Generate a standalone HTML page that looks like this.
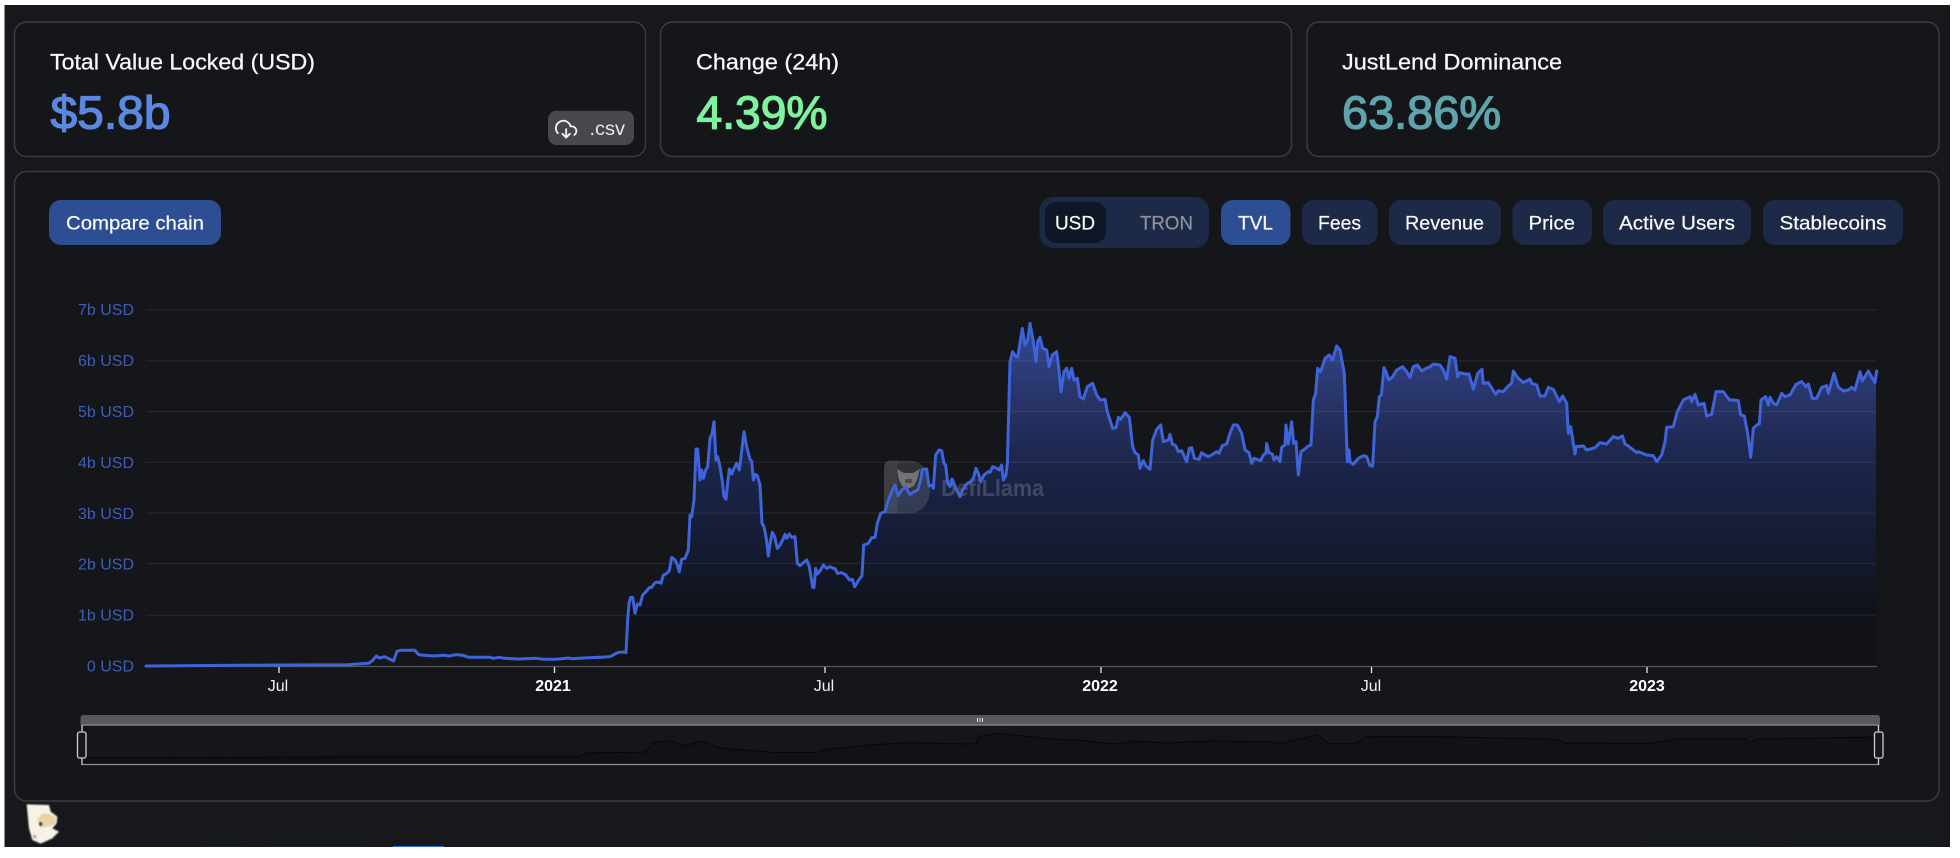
<!DOCTYPE html>
<html lang="en">
<head>
<meta charset="utf-8">
<title>JustLend TVL</title>
<style>
html,body{margin:0;padding:0;background:#fff;width:1960px;height:858px;overflow:hidden}
svg{display:block}
text{font-family:"Liberation Sans",sans-serif}
</style>
</head>
<body>
<svg width="1960" height="858" viewBox="0 0 1960 858" xmlns="http://www.w3.org/2000/svg">
<defs>
<linearGradient id="ag" gradientUnits="userSpaceOnUse" x1="0" y1="75" x2="0" y2="1098">
<stop offset="0" stop-color="rgb(52,72,148)"/>
<stop offset=".22" stop-color="rgb(40,52,104)"/>
<stop offset=".416" stop-color="rgb(27,37,73)"/>
<stop offset=".551" stop-color="rgb(24,31,60)"/>
<stop offset=".698" stop-color="rgb(20,25,44)"/>
<stop offset=".85" stop-color="rgb(16,18,25)"/>
<stop offset="1" stop-color="rgb(17,18,21)"/>
</linearGradient>
<filter id="bl" x="-10%" y="-10%" width="120%" height="120%"><feGaussianBlur stdDeviation="2.200"/></filter>
</defs>

<!-- page surface -->
<rect x="4.5" y="5" width="1945.5" height="842" fill="#17181c"/>
<rect x="393" y="846" width="51" height="1" fill="#2f6ce0"/>
<rect x="206" y="846.2" width="36" height=".8" fill="#1b2130"/>
<rect x="270" y="846.2" width="95" height=".8" fill="#1b2130"/>
<rect x="1643" y="846.2" width="117" height=".8" fill="#1b2130"/>
<rect x="1787" y="846.2" width="146" height=".8" fill="#1b2130"/>

<!-- stat cards -->
<g fill="#14161a" stroke="#3b3c40" stroke-width="1.5">
<rect x="14.5" y="22" width="631" height="134.5" rx="12"/>
<rect x="660.5" y="22" width="631" height="134.5" rx="12"/>
<rect x="1307" y="22" width="632" height="134.5" rx="12"/>
<rect x="14.5" y="171.5" width="1924.5" height="629.5" rx="12"/>
</g>

<g fill="#fafafa" stroke="#fafafa" stroke-width=".25" font-size="22">
<text x="50" y="69.5" textLength="265" lengthAdjust="spacingAndGlyphs">Total Value Locked (USD)</text>
<text x="696" y="69.5" textLength="143" lengthAdjust="spacingAndGlyphs">Change (24h)</text>
<text x="1342" y="69.5" textLength="220" lengthAdjust="spacingAndGlyphs">JustLend Dominance</text>
</g>
<g font-size="46" stroke-width="1.300">
<text x="50.5" y="128.5" fill="#5b89df" stroke="#5b89df" textLength="120" lengthAdjust="spacingAndGlyphs">$5.8b</text>
<text x="696.5" y="128.5" fill="#7ef29d" stroke="#7ef29d" textLength="131" lengthAdjust="spacingAndGlyphs">4.39%</text>
<text x="1342" y="128.5" fill="#5fa4ad" stroke="#5fa4ad" textLength="159" lengthAdjust="spacingAndGlyphs">63.86%</text>
</g>

<!-- csv button -->
<rect x="548" y="110.7" width="86" height="34.3" rx="8.5" fill="#47484d"/>
<g transform="translate(555,118) scale(.93)" fill="none" stroke="#f2f2f2" stroke-width="2" stroke-linecap="round" stroke-linejoin="round">
<polyline points="8 17 12 21 16 17"/>
<line x1="12" y1="12" x2="12" y2="21"/>
<path d="M20.88 18.09A5 5 0 0 0 18 9h-1.26A8 8 0 1 0 3 16.29"/>
</g>
<text x="589.5" y="135" font-size="19" fill="#e8e8e8" textLength="35.5" lengthAdjust="spacingAndGlyphs">.csv</text>

<!-- controls -->
<rect x="49" y="200" width="172" height="45" rx="12" fill="#2d4e92"/>
<rect x="1039.5" y="197" width="169.5" height="51" rx="14" fill="#1c2a47"/>
<rect x="1045" y="202" width="61" height="41" rx="11" fill="#0f1626"/>
<rect x="1221" y="200" width="69.5" height="45" rx="12" fill="#2d4e92"/>
<g fill="#1c2a47">
<rect x="1302" y="200" width="75.500" height="45" rx="12"/>
<rect x="1389" y="200" width="112" height="45" rx="12"/>
<rect x="1512.5" y="200" width="79.500" height="45" rx="12"/>
<rect x="1603" y="200" width="148" height="45" rx="12"/>
<rect x="1763" y="200" width="140" height="45" rx="12"/>
</g>
<g fill="#fafafa" stroke="#fafafa" stroke-width=".2" font-size="19.5">
<text x="66" y="229.5" textLength="138" lengthAdjust="spacingAndGlyphs">Compare chain</text>
<text x="1055" y="229.5" textLength="40" lengthAdjust="spacingAndGlyphs">USD</text>
<text x="1140" y="229.5" textLength="53" lengthAdjust="spacingAndGlyphs" fill="#8e939b" stroke="#8e939b">TRON</text>
<text x="1238" y="229.5" textLength="35" lengthAdjust="spacingAndGlyphs">TVL</text>
<text x="1318" y="229.5" textLength="43" lengthAdjust="spacingAndGlyphs">Fees</text>
<text x="1405" y="229.5" textLength="79" lengthAdjust="spacingAndGlyphs">Revenue</text>
<text x="1528.5" y="229.5" textLength="46.5" lengthAdjust="spacingAndGlyphs">Price</text>
<text x="1619" y="229.5" textLength="116" lengthAdjust="spacingAndGlyphs">Active Users</text>
<text x="1779.5" y="229.5" textLength="107" lengthAdjust="spacingAndGlyphs">Stablecoins</text>
</g>

<!-- y labels -->
<g fill="#3f5db8" font-size="16" text-anchor="end">
<text x="134" y="315">7b USD</text>
<text x="134" y="366">6b USD</text>
<text x="134" y="417">5b USD</text>
<text x="134" y="468">4b USD</text>
<text x="134" y="519">3b USD</text>
<text x="134" y="569.5">2b USD</text>
<text x="134" y="620.5">1b USD</text>
<text x="134" y="671.5">0 USD</text>
</g>

<!-- area -->
<g transform="translate(560,300) scale(.333333)" fill="url(#ag)">
<polygon points="120,1099.500 120,1072 150,1070 165,1062 175,1057 190,1056 198,1058 203,960 207,910 212,892 218,892 225,940 232,912 240,915 248,885 258,875 268,863 275,862 285,848 295,846 303,850 310,825 318,822 328,812 335,772 345,780 352,795 358,815 365,778 375,775 385,750 390,645 395,650 402,600 408,447 413,447 420,540 425,510 430,535 438,508 443,500 450,415 456,402 462,365 468,480 473,470 480,500 487,545 492,590 498,598 503,550 508,507 515,522 522,505 530,490 538,510 542,478 552,395 560,440 570,478 575,483 580,540 586,523 592,527 600,555 606,670 612,680 618,710 625,768 630,730 637,697 644,710 652,745 660,735 668,720 675,703 680,715 688,702 695,712 705,710 712,790 720,797 730,788 740,780 748,800 758,862 762,863 767,805 772,822 782,810 790,795 800,805 810,800 820,805 826,806 832,820 845,818 858,825 868,840 877,838 884,860 893,845 906,827 911,735 925,730 935,713 945,712 952,670 962,640 975,635 985,600 997,570 1005,555 1015,587 1025,570 1037,562 1050,583 1062,575 1073,570 1082,540 1087,508 1100,507 1107,558 1118,555 1120,565 1127,465 1137,450 1145,452 1152,490 1157,495 1163,550 1170,560 1176,537 1190,570 1200,590 1210,565 1222,550 1232,545 1240,535 1248,505 1255,520 1262,545 1272,525 1285,515 1290,517 1298,500 1310,505 1318,510 1325,495 1330,540 1338,525 1342,490 1350,185 1358,155 1368,170 1373,172 1387,85 1395,135 1403,120 1410,70 1420,125 1428,185 1433,125 1440,112 1448,145 1460,150 1467,200 1477,165 1490,155 1497,210 1503,275 1512,215 1520,205 1527,235 1535,205 1542,240 1552,235 1560,290 1560,1099.500"/>
</g>
<g transform="translate(1000,300) scale(.333333)" fill="url(#ag)">
<polygon points="240,1099.500 240,290 250,297 262,260 278,250 290,285 300,300 315,298 322,335 338,385 348,383 355,352 362,358 375,338 388,352 398,440 405,458 415,465 420,505 430,482 438,498 450,508 458,420 470,388 482,375 490,425 505,420 510,403 517,432 527,437 535,455 545,452 560,485 568,445 575,443 583,475 597,478 605,458 615,465 625,470 640,462 650,455 657,460 667,437 680,432 690,400 700,375 712,375 725,400 735,450 747,458 755,490 762,475 770,478 782,482 790,465 798,460 800,430 807,458 817,462 822,480 830,470 840,485 845,442 855,435 858,375 865,432 875,365 881,430 888,425 895,525 903,455 915,447 925,438 933,435 940,300 947,280 953,205 962,215 975,175 988,165 997,180 1010,138 1020,150 1033,220 1042,485 1047,450 1050,485 1060,493 1075,475 1090,467 1100,470 1110,497 1118,498 1125,365 1132,350 1138,290 1144,285 1152,203 1158,215 1166,240 1178,230 1190,210 1208,200 1220,215 1230,232 1240,200 1252,195 1265,213 1278,205 1290,200 1300,192 1320,195 1330,210 1340,237 1350,170 1365,175 1373,230 1380,218 1395,222 1407,222 1420,268 1433,220 1446,208 1446,1099.500"/>
</g>
<g transform="translate(1480,300) scale(.333333)" fill="url(#ag)">
<polygon points="6,1099.500 6,208 10,250 25,248 47,283 55,272 70,275 85,258 95,250 100,213 112,232 130,248 150,237 155,250 170,255 180,288 195,288 205,262 220,268 238,305 248,288 260,310 265,400 272,380 285,462 288,440 310,438 320,450 345,443 360,428 380,432 400,410 415,415 427,408 435,432 445,438 470,458 475,455 500,465 520,467 530,485 545,465 555,425 560,382 580,380 592,335 610,300 630,290 635,305 645,283 655,315 672,310 680,348 695,343 708,275 730,275 748,300 760,300 775,302 782,345 793,348 803,400 812,472 820,385 830,375 838,372 843,300 857,290 865,315 870,292 880,310 890,315 905,280 915,290 930,285 948,253 965,245 978,260 985,252 997,295 1010,295 1025,262 1040,257 1045,280 1062,220 1075,262 1090,273 1105,270 1115,262 1125,270 1140,215 1147,243 1165,213 1185,248 1188,225 1188,1099.500"/>
</g>

<!-- grid -->
<g stroke="#fff" stroke-opacity=".07" stroke-width="1.200">
<line x1="146" x2="1876" y1="310" y2="310"/>
<line x1="146" x2="1876" y1="360.800" y2="360.800"/>
<line x1="146" x2="1876" y1="411.500" y2="411.500"/>
<line x1="146" x2="1876" y1="462.300" y2="462.300"/>
<line x1="146" x2="1876" y1="513" y2="513"/>
<line x1="146" x2="1876" y1="563.500" y2="563.500"/>
<line x1="146" x2="1876" y1="615.300" y2="615.300"/>
</g>
<line x1="146" x2="1877" y1="666.500" y2="666.500" stroke="#57585c" stroke-width="1.300"/>
<g stroke="#e8e8e8" stroke-width="1.300">
<line x1="279" x2="279" y1="667" y2="673"/>
<line x1="554.500" x2="554.500" y1="667" y2="673"/>
<line x1="825" x2="825" y1="667" y2="673"/>
<line x1="1101" x2="1101" y1="667" y2="673"/>
<line x1="1371.500" x2="1371.500" y1="667" y2="673"/>
<line x1="1647" x2="1647" y1="667" y2="673"/>
</g>
<g font-size="16" fill="#f0f0f0" text-anchor="middle">
<text x="278" y="691">Jul</text>
<text x="553" y="691" font-weight="700" fill="#fff">2021</text>
<text x="824" y="691">Jul</text>
<text x="1100" y="691" font-weight="700" fill="#fff">2022</text>
<text x="1371" y="691">Jul</text>
<text x="1647" y="691" font-weight="700" fill="#fff">2023</text>
</g>

<!-- watermark -->
<g>
<path d="M884 468q0-7.500 7.500-7.500h15q23.500 0 23.500 26.500t-23.500 26.500h-22.500z" fill="#fff" opacity=".12"/>
<path d="M884 468q0-7.500 7.500-7.500h6v53h-13.500z" fill="#fff" opacity=".06"/>
<polygon points="897,469 904,473 913,473 920,469 917,480 914,486 907,489 902,486 899,480" fill="#fff" opacity=".32"/>
<rect x="905" y="479" width="7" height="4" fill="#000" opacity=".35"/>
<text x="941" y="496" font-size="23" font-weight="700" fill="#fff" opacity=".17" textLength="103" lengthAdjust="spacingAndGlyphs">DefiLlama</text>
</g>

<!-- line -->
<g fill="none" stroke="#3f63d8" stroke-linejoin="round" stroke-linecap="round">
<polyline stroke-width="3" points="146,666 279,665 347,664.700 368.600,663.300 372,661 376.400,656 379,658 384.600,656.700 393.600,661 397,651.300 400.700,650.300 415,650.300 418.600,654.700 433,656 443.600,655.300 449,656 456,654.700 463,655.300 468.600,657.300 490,657.300 493.600,658.300 499,657.300 504.300,658.300 518.600,659 536.400,658.300 543.600,659.300 556,659.300 568.600,658 572,658.700 583,658 600,657.300"/>
<g transform="translate(560,300) scale(.333333)" stroke-width="9">
<polyline points="120,1072 150,1070 165,1062 175,1057 190,1056 198,1058 203,960 207,910 212,892 218,892 225,940 232,912 240,915 248,885 258,875 268,863 275,862 285,848 295,846 303,850 310,825 318,822 328,812 335,772 345,780 352,795 358,815 365,778 375,775 385,750 390,645 395,650 402,600 408,447 413,447 420,540 425,510 430,535 438,508 443,500 450,415 456,402 462,365 468,480 473,470 480,500 487,545 492,590 498,598 503,550 508,507 515,522 522,505 530,490 538,510 542,478 552,395 560,440 570,478 575,483 580,540 586,523 592,527 600,555 606,670 612,680 618,710 625,768 630,730 637,697 644,710 652,745 660,735 668,720 675,703 680,715 688,702 695,712 705,710 712,790 720,797 730,788 740,780 748,800 758,862 762,863 767,805 772,822 782,810 790,795 800,805 810,800 820,805 826,806 832,820 845,818 858,825 868,840 877,838 884,860 893,845 906,827 911,735 925,730 935,713 945,712 952,670 962,640 975,635 985,600 997,570 1005,555 1015,587 1025,570 1037,562 1050,583 1062,575 1073,570 1082,540 1087,508 1100,507 1107,558 1118,555 1120,565 1127,465 1137,450 1145,452 1152,490 1157,495 1163,550 1170,560 1176,537 1190,570 1200,590 1210,565 1222,550 1232,545 1240,535 1248,505 1255,520 1262,545 1272,525 1285,515 1290,517 1298,500 1310,505 1318,510 1325,495 1330,540 1338,525 1342,490 1350,185 1358,155 1368,170 1373,172 1387,85 1395,135 1403,120 1410,70 1420,125 1428,185 1433,125 1440,112 1448,145 1460,150 1467,200 1477,165 1490,155 1497,210 1503,275 1512,215 1520,205 1527,235 1535,205 1542,240 1552,235 1560,290"/>
</g>
<g transform="translate(1000,300) scale(.333333)" stroke-width="9">
<polyline points="240,290 250,297 262,260 278,250 290,285 300,300 315,298 322,335 338,385 348,383 355,352 362,358 375,338 388,352 398,440 405,458 415,465 420,505 430,482 438,498 450,508 458,420 470,388 482,375 490,425 505,420 510,403 517,432 527,437 535,455 545,452 560,485 568,445 575,443 583,475 597,478 605,458 615,465 625,470 640,462 650,455 657,460 667,437 680,432 690,400 700,375 712,375 725,400 735,450 747,458 755,490 762,475 770,478 782,482 790,465 798,460 800,430 807,458 817,462 822,480 830,470 840,485 845,442 855,435 858,375 865,432 875,365 881,430 888,425 895,525 903,455 915,447 925,438 933,435 940,300 947,280 953,205 962,215 975,175 988,165 997,180 1010,138 1020,150 1033,220 1042,485 1047,450 1050,485 1060,493 1075,475 1090,467 1100,470 1110,497 1118,498 1125,365 1132,350 1138,290 1144,285 1152,203 1158,215 1166,240 1178,230 1190,210 1208,200 1220,215 1230,232 1240,200 1252,195 1265,213 1278,205 1290,200 1300,192 1320,195 1330,210 1340,237 1350,170 1365,175 1373,230 1380,218 1395,222 1407,222 1420,268 1433,220 1446,208"/>
</g>
<g transform="translate(1480,300) scale(.333333)" stroke-width="9">
<polyline points="6,208 10,250 25,248 47,283 55,272 70,275 85,258 95,250 100,213 112,232 130,248 150,237 155,250 170,255 180,288 195,288 205,262 220,268 238,305 248,288 260,310 265,400 272,380 285,462 288,440 310,438 320,450 345,443 360,428 380,432 400,410 415,415 427,408 435,432 445,438 470,458 475,455 500,465 520,467 530,485 545,465 555,425 560,382 580,380 592,335 610,300 630,290 635,305 645,283 655,315 672,310 680,348 695,343 708,275 730,275 748,300 760,300 775,302 782,345 793,348 803,400 812,472 820,385 830,375 838,372 843,300 857,290 865,315 870,292 880,310 890,315 905,280 915,290 930,285 948,253 965,245 978,260 985,252 997,295 1010,295 1025,262 1040,257 1045,280 1062,220 1075,262 1090,273 1105,270 1115,262 1125,270 1140,215 1147,243 1165,213 1185,248 1190,213"/>
</g>
</g>

<!-- data zoom slider -->
<path d="M80.500 725v-7q0-3 3-3h1793.500q3 0 3 3v7z" fill="#58595d"/>
<g fill="#e8e8e8">
<rect x="977" y="718" width="1" height="4"/>
<rect x="979.500" y="718" width="1" height="4"/>
<rect x="982" y="718" width="1" height="4"/>
</g>
<polygon fill="#111215" points="82,764 82,758 345.500,757 580,757 586,753 646,752 652.700,742.600 671.400,740.700 682.800,746 702.500,741.400 721,748 729,749 760.600,751 774,752.400 817,752.400 826,749.400 864,745.500 905.700,742.700 968,744 976.500,743.700 978.500,736.400 999,733.600 1051,738.800 1082,740.500 1113,744 1134.800,740.900 1165,743 1212,740.900 1277,742 1277.400,744.400 1317,735 1328.700,743.500 1355,743.800 1366.600,736.800 1435,736.600 1556,739.300 1565,743 1649.700,743.500 1677,739 1746,739 1747,743 1757,739 1819,738 1877,737 1877,764"/>
<polyline fill="none" stroke="#060607" stroke-width=".9" points="82,758 345.500,757 580,757 586,753 646,752 652.700,742.600 671.400,740.700 682.800,746 702.500,741.400 721,748 729,749 760.600,751 774,752.400 817,752.400 826,749.400 864,745.500 905.700,742.700 968,744 976.500,743.700 978.500,736.400 999,733.600 1051,738.800 1082,740.500 1113,744 1134.800,740.900 1165,743 1212,740.900 1277,742 1277.400,744.400 1317,735 1328.700,743.500 1355,743.800 1366.600,736.800 1435,736.600 1556,739.300 1565,743 1649.700,743.500 1677,739 1746,739 1747,743 1757,739 1819,738 1877,737"/>
<g stroke="#8e8f92" stroke-width="1.200">
<line x1="82" x2="1878" y1="725" y2="725"/>
<line x1="82" x2="1878" y1="764.500" y2="764.500"/>
</g>
<g stroke="#cfcfcf" stroke-width="1.300" fill="#17181c">
<line x1="82" x2="82" y1="725" y2="765"/>
<line x1="1878.500" x2="1878.500" y1="725" y2="765"/>
<rect x="77.500" y="732" width="8.500" height="26" rx="2"/>
<rect x="1874.500" y="732" width="8.500" height="26" rx="2"/>
</g>

<!-- llama mascot -->
<g transform="translate(14,795) scale(.333333)">
<polygon filter="url(#bl)" fill="#f6f2e8" points="38,28 105,30 110,50 130,65 128,85 115,100 135,110 115,130 80,146 55,135 45,100"/>
<polygon filter="url(#bl)" fill="#e6d4a6" points="70,72 85,55 110,58 128,70 122,88 100,95 78,98"/>
<ellipse cx="80" cy="87" rx="5" ry="6" fill="#3d3a38" filter="url(#bl)"/>
<ellipse cx="62" cy="125" rx="6" ry="5" fill="#b9ad8f" filter="url(#bl)"/>
</g>
</svg>
</body>
</html>
